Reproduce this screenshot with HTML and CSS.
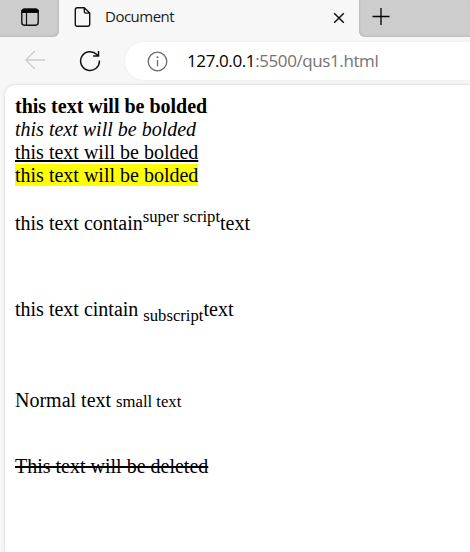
FILE: index.html
```html
<!DOCTYPE html>
<html lang="en">
<head>
<meta charset="utf-8">
<title>Document</title>
<link rel="stylesheet" href="styles.css">
</head>
<body>
<header class="tabs">
  <div class="tab-menu">
    <svg width="20" height="20" viewBox="0 0 20 20" fill="none" stroke="#111"><rect x="1.8" y="1.2" width="16.4" height="16" rx="2.6" stroke-width="1.4"/><path d="M1.5 4.5V4q0-3 2.5-3h12q2.5 0 2.5 3v.5z" fill="#000"/><path d="M6.5 5v12" stroke-width="1.2"/></svg>
  </div>
  <div class="tab">
    <svg class="doc" width="18" height="22" viewBox="0 0 18 22" fill="none" stroke="#111" stroke-width="1.4" stroke-linejoin="round"><path d="M3.3 1.7h7l5.4 5.4v11.2q0 2-2 2H3.3q-2 0-2-2V3.7q0-2 2-2zM10.3 1.7v3.9q0 1.5 1.5 1.5h3.9"/></svg>
    <span class="title">Document</span>
    <svg class="close" width="12" height="12" viewBox="0 0 12 12" stroke="#111" stroke-width="1.5"><path d="M1.2 1.2l9.6 9.6M10.8 1.2L1.2 10.8"/></svg>
  </div>
  <div class="new-tab">
    <svg width="18" height="18" viewBox="0 0 18 18" stroke="#000" stroke-width="1.3"><path d="M.5 8.5h17M9 0v17"/></svg>
  </div>
</header>
<nav class="toolbar">
  <svg class="back" width="22" height="20" viewBox="0 0 22 20" fill="none" stroke="#cdcdcd" stroke-width="1.3"><path d="M21 10H1.8M10.8 1L1.8 10l9 9"/></svg>
  <svg class="reload" width="22" height="22" viewBox="0 0 22 22" fill="none" stroke="#111" stroke-width="1.5"><path d="M20.4 10.5A9.4 9.4 0 1 1 17.8 4.6L19.5 6M19.5 1v5h-5.4"/></svg>
  <div class="address">
    <svg class="info" width="21" height="21" viewBox="0 0 21 21" fill="none" stroke="#6b6b6b" stroke-width="1.3"><circle cx="10.5" cy="10.5" r="9.3"/><path d="M10.5 9v6.3"/><circle cx="10.5" cy="6.2" r="1" fill="#6b6b6b" stroke="none"/></svg>
    <span class="url">127.0.0.1<span class="path">:5500/qus1.html</span></span>
  </div>
</nav>
<main class="page">
  <div><b>this text will be bolded</b></div>
  <div><i>this text will be bolded</i></div>
  <div><u>this text will be bolded</u></div>
  <div><mark>this text will be bolded</mark></div>
  <p class="super">this text contain<sup>super script</sup>text</p>
  <p class="sub">this text cintain <sub>subscript</sub>text</p>
  <p class="normal">Normal text <small>small text</small></p>
  <p class="deleted"><del>This text will be deleted</del></p>
</main>
</body>
</html>
```
FILE: styles.css
```css
* { box-sizing: border-box; }
body {
  margin: 0;
  width: 470px;
  height: 552px;
  overflow: hidden;
  background: #f7f7f7;
  display: flex;
  flex-direction: column;
}
svg { display: block; flex: none; }
.tabs { display: flex; height: 37px; flex: none; }
.tab-menu {
  width: 59px;
  background: #cdcdcd;
  border-radius: 0 0 6px 0;
  box-shadow: inset -1px -1px 2px #bcbcbc;
  padding: 8px 0 0 20px;
}
.tab {
  width: 300px;
  display: flex;
  align-items: flex-start;
  font: 15px/20px "Open Sans", sans-serif;
  color: #1b1b1b;
}
.doc { margin: 6px 0 0 15px; }
.title { margin: 6px 0 0 13px; width: 69px; white-space: nowrap; letter-spacing: -0.5px; }
.close { margin: 12px 0 0 159px; }
.new-tab {
  flex: 1;
  background: #cdcdcd;
  border-radius: 0 0 0 6px;
  box-shadow: inset 1px -1px 2px #bcbcbc;
  padding: 8px 0 0 13px;
}
.toolbar { display: flex; height: 48px; flex: none; }
.back { margin: 13px 0 0 24px; }
.reload { margin: 13px 0 0 33px; }
.address {
  flex: 1;
  display: flex;
  height: 38px;
  margin: 5px 0 0 24px;
  background: #fff;
  border-radius: 19px 0 0 19px;
  box-shadow: 0 0 3px #e8e8e8;
}
.info { margin: 9px 0 0 22px; }
.url {
  margin: 7px 0 0 19px;
  font: 17px/24px "Open Sans", sans-serif;
  letter-spacing: -0.4px;
  color: #000;
  white-space: nowrap;
}
.path { color: #737373; }
.page {
  flex: 1;
  margin-left: 5px;
  padding: 10px 0 0 10px;
  background: #fff;
  border-radius: 10px 0 0 0;
  box-shadow: 0 0 3px #ccc;
  font: 20px/23px "Liberation Serif", serif;
  color: #000;
  white-space: nowrap;
}
.page div, .page p { height: 23px; margin: 0; }
.page u { text-decoration-thickness: 2px; text-underline-offset: 1px; }
.page del { text-decoration-thickness: 2px; }
mark { background: #ff0; color: #000; }
sup, sub, small { font-size: 16.67px; line-height: 0; }
.page .super { margin-top: 25px; }
.page .sub { margin-top: 63px; }
.page .normal { margin-top: 68px; }
.page .deleted { margin-top: 43px; }
```
